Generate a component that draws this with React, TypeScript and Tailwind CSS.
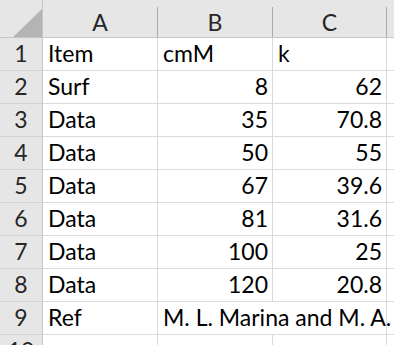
import React from "react";

const rows: [string, string, string][] = [
  ["Item", "cmM", "k"],
  ["Surf", "8", "62"],
  ["Data", "35", "70.8"],
  ["Data", "50", "55"],
  ["Data", "67", "39.6"],
  ["Data", "81", "31.6"],
  ["Data", "100", "25"],
  ["Data", "120", "20.8"],
  ["Ref", "M. L. Marina and M. A.", ""],
];

const isNum = (s: string) => /^[0-9.]+$/.test(s);

function ColHead({ label }: { label: string }) {
  return (
    <div className="flex bg-[#e6e6e6] border-b border-[#c6c6c6]">
      <div className="flex-1 flex items-end justify-center pb-[3px] text-[#262626]">{label}</div>
      <div className="w-px mt-[7px] bg-[#ababab]" />
    </div>
  );
}

export default function App() {
  return (
    <div
      className="w-[394px] h-[345px] overflow-hidden bg-white text-[23px] leading-none text-black"
      style={{ fontFamily: "Lato, 'Open Sans', sans-serif" }}
    >
      <div className="grid grid-cols-[43px_115px_115px_114px_1fr] grid-rows-[38px_repeat(10,33px)]">
        <div className="bg-[#e6e6e6] border-r border-b border-[#c6c6c6] flex items-end justify-end">
          <svg width="29" height="28" viewBox="0 0 29 28" className="block">
            <polygon points="29,0 29,28 0,28" fill="#b4b4b4" />
          </svg>
        </div>
        <ColHead label="A" />
        <ColHead label="B" />
        <ColHead label="C" />
        <div className="bg-[#e6e6e6] border-b border-[#c6c6c6]" />
        {[...rows, ["", "", ""] as [string, string, string]].map((r, i) => (
          <React.Fragment key={i}>
            <div className="bg-[#e6e6e6] border-r border-[#c6c6c6] border-b border-b-[#d4d4d4] flex items-end justify-center pb-[5px] text-[#262626]">
              {i + 1}
            </div>
            {i === 8 ? (
              <>
                <div className="border-r border-b border-[#dadada] flex items-end pl-[5px] pb-[5px] whitespace-nowrap">
                  {r[0]}
                </div>
                <div className="col-span-2 border-r border-b border-[#dadada] flex items-end pl-[5px] pb-[5px] whitespace-nowrap overflow-visible">
                  {r[1]}
                </div>
              </>
            ) : (
              r.map((c, j) => (
                <div
                  key={j}
                  className={`border-r border-b border-[#dadada] flex items-end pb-[5px] whitespace-nowrap ${
                    isNum(c) ? "justify-end pr-[4px]" : "justify-start pl-[5px]"
                  }`}
                >
                  {c}
                </div>
              ))
            )}
            <div className="border-b border-[#dadada]" />
          </React.Fragment>
        ))}
      </div>
    </div>
  );
}
